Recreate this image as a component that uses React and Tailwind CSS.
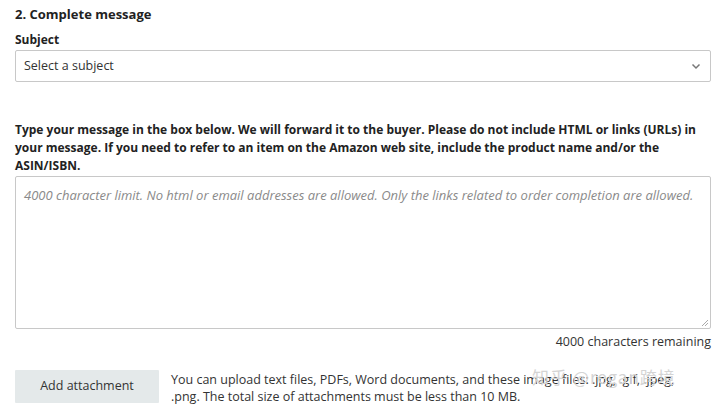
import React from "react";

export default function App() {
  return (
    <div className="w-[720px] h-[407px] bg-white overflow-hidden text-[#111] relative" style={{ fontFamily: '"Open Sans", "Noto Sans", sans-serif' }}>
      <div className="pl-[15px] pr-[9px] pt-[4px]">
        <h2 className="text-[13px] font-bold leading-[20px] text-[#222]">2. Complete message</h2>
        <div className="mt-[7px] text-[12px] font-bold leading-[18px] text-[#222]">Subject</div>
        <div className="mt-[1px] h-[32px] border border-[#c8c8c8] rounded-[2px] flex items-center justify-between pl-[8px] pr-[8px] bg-white">
          <span className="text-[12.5px] text-[#333]">Select a subject</span>
          <svg width="10" height="7" viewBox="0 0 10 7" className="mr-[1px]">
            <path d="M1.5 1.5 L5 5 L8.5 1.5" fill="none" stroke="#777" strokeWidth="1.5" />
          </svg>
        </div>
        <p className="mt-[39px] text-[12px] font-bold leading-[18px] text-[#222]">
          Type your message in the box below. We will forward it to the buyer. Please do not include HTML or links (URLs) in your message. If you need to refer to an item on the Amazon web site, include the product name and/or the ASIN/ISBN.
        </p>
        <div className="relative mt-[1px] h-[153px] border border-[#c8c8c8] rounded-[2px] pl-[8px] pt-[5px]">
          <span className="text-[13px] italic text-[#8a8a8a]">4000 character limit. No html or email addresses are allowed. Only the links related to order completion are allowed.</span>
          <svg width="8" height="8" viewBox="0 0 8 8" className="absolute right-[1px] bottom-[1px]">
            <path d="M7 1 L1 7 M7 4 L4 7" stroke="#aaa" strokeWidth="1" />
          </svg>
        </div>
        <div className="mt-[4px] text-right text-[12.5px] text-[#333] leading-[18px]">4000 characters remaining</div>
        <div className="mt-[19px] flex items-start gap-[12px]">
          <button className="w-[144px] h-[33px] shrink-0 bg-[#e4e9ea] text-[12.5px] text-[#333] rounded-[1px]">Add attachment</button>
          <div className="text-[12.5px] text-[#333] leading-[17px] pt-[1px]">
            You can upload text files, PDFs, Word documents, and these image files: .jpg, .gif, .jpeg,
            <br />
            .png. The total size of attachments must be less than 10 MB.
          </div>
        </div>
      </div>
      <div className="absolute left-[532px] top-[364px] text-[17px] text-[#d4d4d4] tracking-[1px] pointer-events-none" style={{ fontFamily: '"Noto Sans CJK SC", sans-serif' }}>
        知乎 @regan跨境
      </div>
    </div>
  );
}
